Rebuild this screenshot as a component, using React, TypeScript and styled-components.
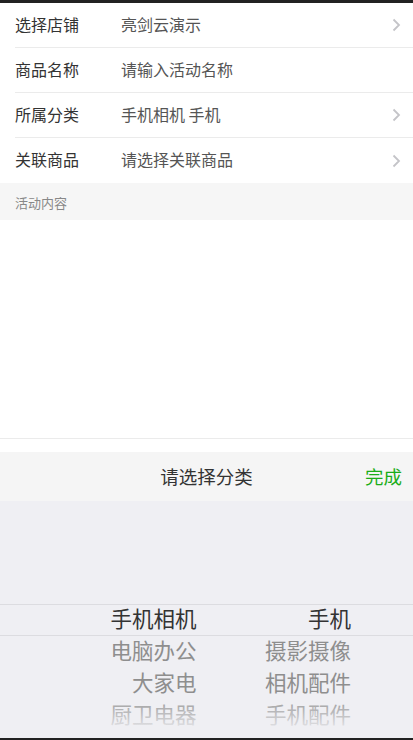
import React from 'react';
import styled, { createGlobalStyle } from 'styled-components';

const GlobalStyle = createGlobalStyle`
    * {
        box-sizing: border-box;
    }
    body {
        margin: 0;
        background: #ffffff;
        font-family: 'Noto Sans CJK SC', 'Noto Sans', sans-serif;
    }
`;

const Page = styled.div`
    width: 413px;
    height: 740px;
    display: flex;
    flex-direction: column;
    border-top: 3px solid #222222;
    border-bottom: 2px solid #222222;
    overflow: hidden;
`;

const Form = styled.ul`
    list-style: none;
    margin: 0;
    padding: 0 0 0 15px;
    background: #ffffff;
`;

const Row = styled.li<{ last?: boolean }>`
    height: 45px;
    display: flex;
    align-items: center;
    padding-right: 12px;
    padding-bottom: 3px;
    border-bottom: ${(p) => (p.last ? 'none' : '1px solid #ebebeb')};
`;

const Label = styled.span`
    width: 106px;
    font-size: 16px;
    color: #333333;
`;

const Value = styled.span`
    flex: 1;
    font-size: 16px;
    color: #555555;
`;

const Chevron = styled.svg`
    width: 9px;
    height: 14px;
    margin-top: 3px;
`;

const SectionTitle = styled.div`
    height: 37px;
    display: flex;
    align-items: center;
    padding-left: 15px;
    padding-top: 2px;
    background: #f6f6f6;
    font-size: 13px;
    color: #888888;
`;

const ContentArea = styled.div`
    height: 219px;
    border-bottom: 1px solid #ebebeb;
    background: #ffffff;
`;

const Spacer = styled.div`
    height: 13px;
    background: #ffffff;
`;

const PickerHeader = styled.div`
    height: 49px;
    position: relative;
    display: flex;
    align-items: center;
    justify-content: center;
    padding-bottom: 2px;
    background: #f5f5f5;
`;

const PickerTitle = styled.span`
    font-size: 18.5px;
    color: #333333;
`;

const DoneButton = styled.span`
    position: absolute;
    right: 11px;
    font-size: 18.5px;
    color: #1aad19;
`;

const PickerBody = styled.div`
    flex: 1;
    position: relative;
    background: #efeff3;
    padding-top: 101px;
`;

const SelectedBand = styled.div`
    position: absolute;
    left: 0;
    right: 0;
    top: 103px;
    height: 32px;
    border-top: 1px solid #dcdce0;
    border-bottom: 1px solid #dcdce0;
`;

const Columns = styled.div`
    display: grid;
    grid-template-columns: 1fr 1fr;
`;

const Column = styled.div<{ padRight: number }>`
    display: flex;
    flex-direction: column;
    align-items: flex-end;
    padding-right: ${(p) => p.padRight}px;
`;

const Item = styled.div<{ active?: boolean }>`
    height: 32px;
    line-height: 32px;
    font-size: 21.5px;
    color: ${(p) => (p.active ? '#333333' : '#8e8e8e')};
    white-space: nowrap;
`;

const Fade = styled.div`
    position: absolute;
    left: 0;
    right: 0;
    bottom: 0;
    height: 36px;
    background: linear-gradient(
        to bottom,
        rgba(239, 239, 243, 0.2) 0%,
        rgba(239, 239, 243, 0.6) 45%,
        rgba(239, 239, 243, 1) 85%
    );
    pointer-events: none;
`;

const rows = [
    { label: '选择店铺', value: '亮剑云演示', arrow: true },
    { label: '商品名称', value: '请输入活动名称', arrow: false },
    { label: '所属分类', value: '手机相机 手机', arrow: true },
    { label: '关联商品', value: '请选择关联商品', arrow: true },
];

const firstColumn = ['手机相机', '电脑办公', '大家电', '厨卫电器'];
const secondColumn = ['手机', '摄影摄像', '相机配件', '手机配件'];

const Arrow: React.FC = () => (
    <Chevron viewBox="0 0 9 14">
        <polyline points="1.5,1.5 7,7 1.5,12.5" fill="none" stroke="#c4c4c8" strokeWidth="1.8" />
    </Chevron>
);

const App: React.FC = () => {
    return (
        <>
            <GlobalStyle />
            <Page>
                <Form>
                    {rows.map((row, i) => (
                        <Row key={row.label} last={i === rows.length - 1}>
                            <Label>{row.label}</Label>
                            <Value>{row.value}</Value>
                            {row.arrow && <Arrow />}
                        </Row>
                    ))}
                </Form>
                <SectionTitle>活动内容</SectionTitle>
                <ContentArea />
                <Spacer />
                <PickerHeader>
                    <PickerTitle>请选择分类</PickerTitle>
                    <DoneButton>完成</DoneButton>
                </PickerHeader>
                <PickerBody>
                    <SelectedBand />
                    <Columns>
                        <Column padRight={10}>
                            {firstColumn.map((name, i) => (
                                <Item key={name} active={i === 0}>
                                    {name}
                                </Item>
                            ))}
                        </Column>
                        <Column padRight={62}>
                            {secondColumn.map((name, i) => (
                                <Item key={name} active={i === 0}>
                                    {name}
                                </Item>
                            ))}
                        </Column>
                    </Columns>
                    <Fade />
                </PickerBody>
            </Page>
        </>
    );
};

export default App;
